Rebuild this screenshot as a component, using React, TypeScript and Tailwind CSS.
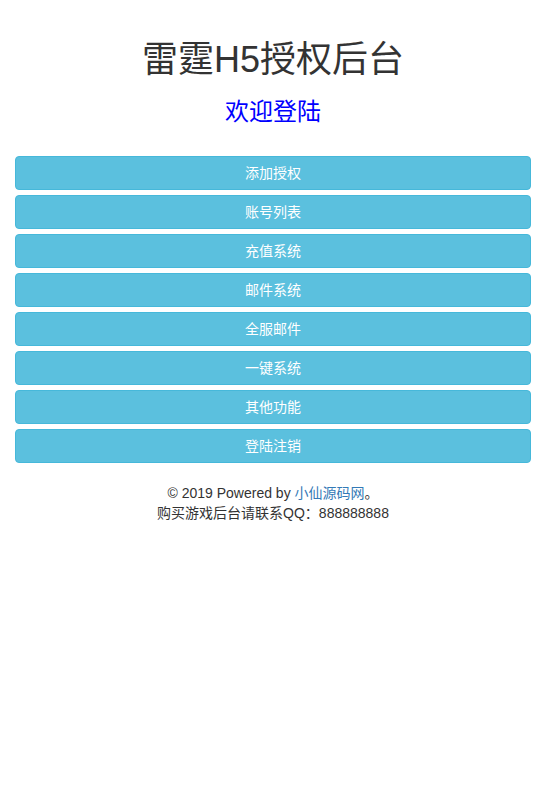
const menu = ['添加授权', '账号列表', '充值系统', '邮件系统', '全服邮件', '一键系统', '其他功能', '登陆注销']

export default function App() {
  return (
    <div className="min-h-[798px] bg-white px-[15px] pt-10 text-[14px] text-[#333] [font-family:'Liberation_Sans','Noto_Sans_CJK_SC',sans-serif]">
      <h1 className="text-center text-[36px] leading-10 font-normal">雷霆H5授权后台</h1>
      <h3 className="mt-[19px] text-center text-[24px] leading-[26px] font-normal text-[#0000ff]">欢迎登陆</h3>
      <div className="mt-[31px] flex flex-col gap-[5px]">
        {menu.map((item) => (
          <button
            key={item}
            className="h-[34px] w-full rounded border border-[#46b8da] bg-[#5bc0de] text-[14px] text-white"
          >
            {item}
          </button>
        ))}
      </div>
      <footer className="mt-5 text-center leading-5">
        <p>
          © 2019 Powered by <a className="text-[#337ab7]">小仙源码网</a>。
        </p>
        <p>购买游戏后台请联系QQ：888888888</p>
      </footer>
    </div>
  )
}
